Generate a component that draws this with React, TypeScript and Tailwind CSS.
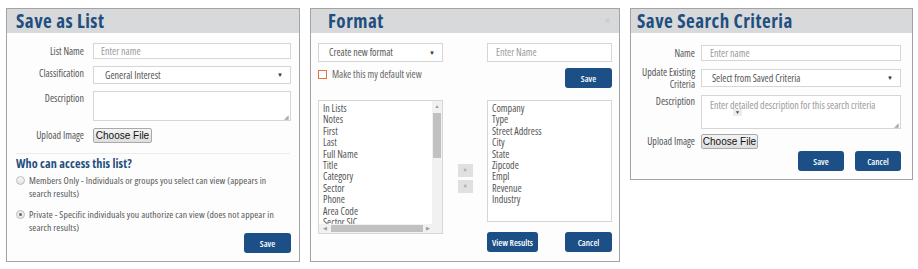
import React from "react";

const font = "font-['Open_Sans','Liberation_Sans',sans-serif] font-stretch-[75%]";

const Header: React.FC<{ title: string; pl: string; close?: boolean }> = ({ title, pl, close }) => (
    <div className={`flex items-center justify-between h-[24px] bg-[#d8d9da] ${pl} pr-[9px]`}>
        <span className="text-[19px] font-bold leading-none text-[#1f4f80] tracking-[0.5px]">{title}</span>
        {close && <span className="text-[12px] text-[#c4c4c4] leading-none">×</span>}
    </div>
);

const Btn: React.FC<{ label: string; w: string }> = ({ label, w }) => (
    <button className={`${w} h-[20px] rounded-[3px] bg-[#1b4f86] text-white text-[9px] font-semibold leading-none`}>
        {label}
    </button>
);

const Arrow = () => (
    <span className="absolute right-[7px] top-1/2 -translate-y-1/2 text-[6px] text-[#333]">▼</span>
);

const ChooseFile: React.FC<{ w: string }> = ({ w }) => (
    <button className={`${w} h-[15px] border border-[#a9a9a9] rounded-[2px] bg-gradient-to-b from-[#f4f4f4] to-[#dedede] text-[10px] leading-none text-[#111] font-['Liberation_Sans',sans-serif] font-stretch-normal`}>
        Choose File
    </button>
);

const SaveAsList = () => (
    <div className="w-[294px] h-[254px] border border-[#a3a3a3] bg-[#fdfdfd] flex flex-col">
        <Header title="Save as List" pl="pl-[9px]" />
        <div className="flex flex-col pr-[8px] text-[10px] text-[#555]">
            <div className="flex items-center mt-[10px]">
                <label className="w-[77px] text-right">List Name</label>
                <div className="ml-[9px] flex-1 h-[16px] border border-[#d6d6d6] bg-white flex items-center pl-[7px] text-[#999]">Enter name</div>
            </div>
            <div className="flex items-start mt-[7px]">
                <label className="w-[77px] text-right leading-[15px]">Classification</label>
                <div className="relative ml-[9px] flex-1 h-[18px] border border-[#d6d6d6] bg-white flex items-center pl-[11px] text-[#555]">
                    General Interest
                    <Arrow />
                </div>
            </div>
            <div className="flex items-start mt-[7px]">
                <label className="w-[77px] text-right leading-[15px]">Description</label>
                <div className="relative ml-[9px] flex-1 h-[30px] border border-[#d6d6d6] bg-white">
                    <span className="absolute right-[1px] bottom-[0px] text-[6px] text-[#aaa] leading-none">◢</span>
                </div>
            </div>
            <div className="flex items-center mt-[7px] h-[15px]">
                <label className="w-[77px] text-right">Upload Image</label>
                <div className="ml-[9px] flex"><ChooseFile w="w-[59px]" /></div>
            </div>
        </div>
        <div className="mx-[9px] mt-[10px] border-t border-[#ececec]" />
        <div className="px-[9px] pt-[1px] text-[12.2px] font-bold text-[#1f4f80] leading-[17px] tracking-[0.1px]">Who can access this list?</div>
        <div className="flex flex-col pl-[9px] text-[9.7px] text-[#555] leading-[13px] tracking-[0.1px] whitespace-nowrap">
            <div className="flex items-start mt-[2px]">
                <span className="mt-[2px] w-[9px] h-[9px] rounded-full border border-[#bdbdbd] bg-gradient-to-b from-[#f7f7f7] to-[#e2e2e2] shrink-0" />
                <span className="ml-[4px]">Members Only - Individuals or groups you select can view (appears in<br />search results)</span>
            </div>
            <div className="flex items-start mt-[8px]">
                <span className="mt-[2px] w-[9px] h-[9px] rounded-full border border-[#bdbdbd] bg-[#ececec] shrink-0 flex items-center justify-center">
                    <span className="w-[3px] h-[3px] rounded-full bg-[#666]" />
                </span>
                <span className="ml-[4px]">Private - Specific individuals you authorize can view (does not appear in<br />search results)</span>
            </div>
        </div>
        <div className="flex justify-end pr-[8px] -mt-[1px]">
            <Btn label="Save" w="w-[47px]" />
        </div>
    </div>
);

const leftItems = ["In Lists", "Notes", "First", "Last", "Full Name", "Title", "Category", "Sector", "Phone", "Area Code", "Sector SIC"];
const rightItems = ["Company", "Type", "Street Address", "City", "State", "Zipcode", "Empl", "Revenue", "Industry"];

const Format = () => (
    <div className="w-[310px] h-[254px] border border-[#a3a3a3] bg-[#fdfdfd] flex flex-col">
        <Header title="Format" pl="pl-[17px]" close />
        <div className="flex px-[7px] text-[10px] text-[#555]">
            <div className="w-[125px] flex flex-col">
                <div className="relative mt-[10px] h-[19px] border border-[#d6d6d6] bg-white flex items-center pl-[10px]">
                    Create new format
                    <Arrow />
                </div>
                <div className="flex items-center mt-[5px] h-[15px]">
                    <span className="w-[9px] h-[9px] border border-[#e8703a] bg-white" />
                    <span className="ml-[5px] text-[#666]">Make this my default view</span>
                </div>
                <div className="relative mt-[18px] h-[134px] border border-[#d6d6d6] bg-white overflow-hidden">
                    <div className="pl-[4px] pt-[2px] leading-[11.4px] text-[#555]">
                        {leftItems.map(i => <div key={i}>{i}</div>)}
                    </div>
                    <div className="absolute right-0 top-0 w-[10px] h-[124px] bg-[#f1f1f1] flex flex-col items-center">
                        <span className="text-[5px] text-[#999] mt-[3px] leading-none">▲</span>
                        <div className="mt-[4px] w-[8px] h-[45px] bg-[#c1c1c1]" />
                    </div>
                    <div className="absolute left-0 bottom-0 w-full h-[9px] bg-[#f1f1f1] flex items-center">
                        <span className="text-[5px] text-[#999] ml-[4px] leading-none">◀</span>
                        <div className="ml-[4px] w-[92px] h-[7px] bg-[#c1c1c1]" />
                        <span className="text-[5px] text-[#999] ml-[3px] leading-none">▶</span>
                    </div>
                </div>
            </div>
            <div className="flex-1 flex flex-col items-center pt-[131px] gap-[3px]">
                <span className="w-[15px] h-[13px] bg-[#e0e0e0] text-[7px] text-[#888] flex items-center justify-center">»</span>
                <span className="w-[15px] h-[13px] bg-[#e0e0e0] text-[7px] text-[#888] flex items-center justify-center">«</span>
            </div>
            <div className="w-[125px] flex flex-col">
                <div className="mt-[10px] h-[19px] border border-[#d6d6d6] bg-white flex items-center pl-[8px] text-[#999]">Enter Name</div>
                <div className="flex justify-end mt-[6px]">
                    <Btn label="Save" w="w-[47px]" />
                </div>
                <div className="mt-[12px] h-[122px] border border-[#d6d6d6] bg-white pl-[4px] pt-[2px] leading-[11.4px] text-[#555]">
                    {rightItems.map(i => <div key={i}>{i}</div>)}
                </div>
                <div className="flex justify-between mt-[10px]">
                    <Btn label="View Results" w="w-[51px]" />
                    <Btn label="Cancel" w="w-[47px]" />
                </div>
            </div>
        </div>
    </div>
);

const SaveSearch = () => (
    <div className="w-[283px] h-[172px] border border-[#a3a3a3] bg-[#fdfdfd] flex flex-col">
        <Header title="Save Search Criteria" pl="pl-[6px]" />
        <div className="flex flex-col pr-[11px] text-[10px] text-[#555]">
            <div className="flex items-center mt-[12px]">
                <label className="w-[64px] text-right">Name</label>
                <div className="ml-[6px] flex-1 h-[16px] border border-[#d6d6d6] bg-white flex items-center pl-[8px] text-[#999]">Enter name</div>
            </div>
            <div className="flex items-start mt-[8px] h-[18px]">
                <label className="w-[64px] text-right leading-[12px] -mt-[3px]">Update Existing Criteria</label>
                <div className="relative ml-[6px] flex-1 h-[18px] border border-[#d6d6d6] bg-white flex items-center pl-[10px]">
                    Select from Saved Criteria
                    <Arrow />
                </div>
            </div>
            <div className="flex items-start mt-[8px] h-[34px]">
                <label className="w-[64px] text-right leading-[12px]">Description</label>
                <div className="relative ml-[6px] flex-1 h-[34px] border border-[#d6d6d6] bg-white pl-[8px] pt-[3px] text-[#999] leading-[12px]">
                    Enter detailed description for this search criteria
                    <span className="absolute left-[31px] top-[13px] w-[9px] h-[7px] bg-[#ececec] text-[5px] text-[#444] flex items-center justify-center leading-none">▼</span>
                    <span className="absolute right-[1px] bottom-[0px] text-[6px] text-[#aaa] leading-none">◢</span>
                </div>
            </div>
            <div className="flex items-center mt-[5px] h-[15px]">
                <label className="w-[64px] text-right">Upload Image</label>
                <div className="ml-[6px] flex"><ChooseFile w="w-[57px]" /></div>
            </div>
            <div className="flex justify-end gap-[11px] mt-[2px]">
                <Btn label="Save" w="w-[46px]" />
                <Btn label="Cancel" w="w-[46px]" />
            </div>
        </div>
    </div>
);

export default function App() {
    return (
        <div className={`w-[918px] h-[269px] bg-white flex items-start gap-[10px] pl-[6px] pt-[8px] ${font}`}>
            <SaveAsList />
            <Format />
            <SaveSearch />
        </div>
    );
}
